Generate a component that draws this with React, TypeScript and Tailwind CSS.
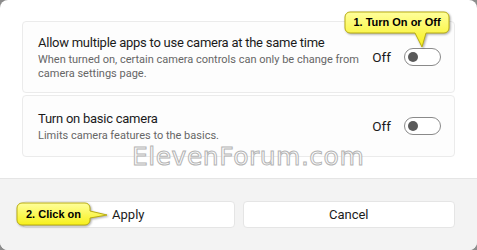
import React from "react";

const font = { fontFamily: "Roboto, 'Noto Sans', sans-serif" };

const Toggle = () => (
  <div className="w-[37px] h-[18px] rounded-full border border-[#8a8a8a] bg-white flex items-center pl-[3px]">
    <div className="w-[10px] h-[10px] rounded-full bg-[#5a5a5a]" />
  </div>
);

const SettingCard = ({ title, desc, className }: { title: string; desc: string[]; className: string }) => (
  <div className={`flex items-center justify-between rounded-[4px] border border-[#ebebeb] bg-[#fdfdfd] pl-[15px] pr-[13px] ${className}`}>
    <div className="flex flex-col">
      <div className="text-[13px] tracking-[-0.25px] leading-[20px] text-[#1b1b1b]">{title}</div>
      {desc.map((d) => (
        <div key={d} className="text-[11px] leading-[14px] text-[#666]">
          {d}
        </div>
      ))}
    </div>
    <div className="flex items-center gap-[13px]">
      <span className="text-[13.5px] text-[#1b1b1b]">Off</span>
      <Toggle />
    </div>
  </div>
);

const App = () => {
  return (
    <div className="relative w-[477px] h-[250px] bg-[#8c8c8c] overflow-hidden" style={font}>
      <div className="h-full rounded-[8px] bg-white flex flex-col overflow-hidden">
        <div className="flex-1 px-[22px] pt-[21px] flex flex-col gap-[2px]">
          <SettingCard
            className="h-[72px]"
            title="Allow multiple apps to use camera at the same time"
            desc={["When turned on, certain camera controls can only be change from", "camera settings page."]}
          />
          <SettingCard className="h-[62px]" title="Turn on basic camera" desc={["Limits camera features to the basics."]} />
        </div>
        <div className="h-[72px] bg-[#f3f3f3] border-t border-[#e5e5e5] px-[22px] flex items-center gap-[8px]">
          <button className="flex-1 h-[27px] rounded-[4px] bg-white border border-[#e5e5e5] text-[13px] text-[#1b1b1b]">
            Apply
          </button>
          <button className="flex-1 h-[27px] rounded-[4px] bg-white border border-[#e5e5e5] text-[13px] text-[#1b1b1b]">
            Cancel
          </button>
        </div>
      </div>

      {/* watermark */}
      <div
        className="absolute left-[132px] top-[144px] text-[25px] leading-[25px] tracking-[0.5px] text-white [-webkit-text-stroke:1px_#b4b4b4] pointer-events-none"
        style={{ fontFamily: "'DejaVu Sans', sans-serif" }}
      >
        ElevenForum.com
      </div>

      {/* callout 1 */}
      <div className="absolute left-[343px] top-[10px] w-[110px] h-[40px]">
        <svg width="110" height="40" className="absolute inset-0 [filter:drop-shadow(1px_1px_1px_rgba(0,0,0,0.35))]">
          <defs>
            <linearGradient id="y1" x1="0" y1="0" x2="0" y2="1">
              <stop offset="0" stopColor="#ffff9c" />
              <stop offset="1" stopColor="#f7f01a" />
            </linearGradient>
          </defs>
          <path
            d="M7,2 H101 A5,5 0 0 1 106,7 V18 A5,5 0 0 1 101,23 H83 L79,37 L72,23 H7 A5,5 0 0 1 2,18 V7 A5,5 0 0 1 7,2 Z"
            fill="url(#y1)"
            stroke="#b9ad12"
            strokeWidth="1"
          />
        </svg>
        <div
          className="absolute left-[2px] top-[2px] w-[104px] h-[21px] flex items-center justify-center text-[11px] font-bold text-black"
          style={{ fontFamily: "'Liberation Sans', Arial, sans-serif" }}
        >
          1. Turn On or Off
        </div>
      </div>

      {/* callout 2 */}
      <div className="absolute left-[15px] top-[201px] w-[96px] h-[28px]">
        <svg width="96" height="28" className="absolute inset-0 [filter:drop-shadow(1px_1px_1px_rgba(0,0,0,0.35))]">
          <defs>
            <linearGradient id="y2" x1="0" y1="0" x2="0" y2="1">
              <stop offset="0" stopColor="#ffff9c" />
              <stop offset="1" stopColor="#f7f01a" />
            </linearGradient>
          </defs>
          <path
            d="M7,2 H70 A5,5 0 0 1 75,7 V10 L92,14 L75,17 V19 A5,5 0 0 1 70,24 H7 A5,5 0 0 1 2,19 V7 A5,5 0 0 1 7,2 Z"
            fill="url(#y2)"
            stroke="#b9ad12"
            strokeWidth="1"
          />
        </svg>
        <div
          className="absolute left-[2px] top-[2px] w-[73px] h-[22px] flex items-center justify-center text-[11px] font-bold text-black"
          style={{ fontFamily: "'Liberation Sans', Arial, sans-serif" }}
        >
          2. Click on
        </div>
      </div>
    </div>
  );
};

export default App;
